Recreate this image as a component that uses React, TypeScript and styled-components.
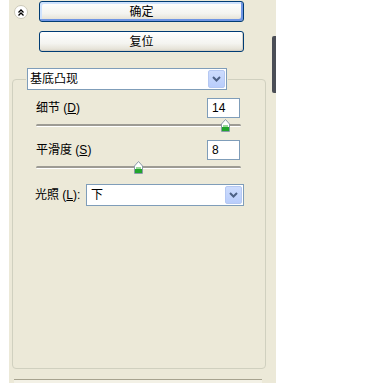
import React from "react";
import styled, { createGlobalStyle } from "styled-components";

const GlobalStyle = createGlobalStyle`
  html, body {
    margin: 0;
    padding: 0;
    background: #ffffff;
  }
  body {
    font-family: "Liberation Sans", "Noto Sans CJK SC", sans-serif;
    font-size: 12px;
    color: #000000;
  }
`;

const params = [
  { label: "细节", key: "D", value: 14, min: 1, max: 15 },
  { label: "平滑度", key: "S", value: 8, min: 1, max: 15 },
];

const TRACK_W = 204;

const App = () => {
  return (
    <Page>
      <GlobalStyle />
      <Panel>
        <Main>
          <TopRow>
            <CollapseBtn>
              <svg width="14" height="14" viewBox="0 0 14 14">
                <circle cx="7" cy="7" r="6.5" fill="#ffffff" stroke="#cbc8b8" />
                <polyline points="4.5,7.5 7,5 9.5,7.5" fill="none" stroke="#000" strokeWidth="1.3" />
                <polyline points="4.5,10.5 7,8 9.5,10.5" fill="none" stroke="#000" strokeWidth="1.3" />
              </svg>
            </CollapseBtn>
            <XPButton $primary>确定</XPButton>
          </TopRow>
          <SecondRow>
            <XPButton>复位</XPButton>
          </SecondRow>

          <Group>
            <GroupLegend>
              <Dropdown $width={200}>
                <DropText>基底凸现</DropText>
                <DropBtn>
                  <Chevron />
                </DropBtn>
              </Dropdown>
            </GroupLegend>

            {params.map((p) => {
              const ratio = (p.value - p.min) / (p.max - p.min);
              return (
                <ParamBlock key={p.key}>
                  <ValueRow>
                    <Label>
                      {p.label} (<u>{p.key}</u>)
                    </Label>
                    <NumberBox>{p.value}</NumberBox>
                  </ValueRow>
                  <Slider>
                    <Track />
                    <Thumb style={{ left: Math.round(ratio * TRACK_W) - 4 }}>
                      <svg width="9" height="13" viewBox="0 0 9 13">
                        <polygon points="0.5,5 4.5,0.5 8.5,5 8.5,12.5 0.5,12.5" fill="#ffffff" stroke="#8b9aa8" />
                        <rect x="1" y="8" width="7" height="4" fill="#21a52c" />
                        <rect x="2" y="6" width="5" height="2" fill="#9ad89a" />
                      </svg>
                    </Thumb>
                  </Slider>
                </ParamBlock>
              );
            })}

            <LightRow>
              <Label>
                光照 (<u>L</u>):
              </Label>
              <Dropdown $width={158}>
                <DropText $pad={4}>下</DropText>
                <DropBtn>
                  <Chevron />
                </DropBtn>
              </Dropdown>
            </LightRow>
          </Group>

          <BottomEdge />
        </Main>
        <Side>
          <ScrollThumb />
        </Side>
      </Panel>
    </Page>
  );
};

const Chevron = () => (
  <svg width="9" height="6" viewBox="0 0 9 6">
    <polyline points="1,1 4.5,4.5 8,1" fill="none" stroke="#4d6185" strokeWidth="2" />
  </svg>
);

export default App;

const Page = styled.div`
  width: 385px;
  height: 383px;
  overflow: hidden;
  background: #ffffff;
`;

const Panel = styled.div`
  margin-left: 9px;
  width: 267px;
  height: 383px;
  background: #ece9d8;
  display: flex;
`;

const Main = styled.div`
  width: 263px;
  display: flex;
  flex-direction: column;
  padding-top: 1px;
  box-sizing: border-box;
`;

const Side = styled.div`
  width: 4px;
  padding-top: 36px;
`;

const ScrollThumb = styled.div`
  height: 57px;
  background: #4b4e56;
  border-radius: 2px 0 0 2px;
`;

const TopRow = styled.div`
  display: flex;
  align-items: center;
  height: 21px;
`;

const SecondRow = styled.div`
  display: flex;
  margin-top: 9px;
  padding-left: 30px;
`;

const CollapseBtn = styled.div`
  width: 14px;
  height: 14px;
  margin-left: 5px;
  margin-right: 11px;
  display: flex;
`;

const XPButton = styled.div<{ $primary?: boolean }>`
  width: 205px;
  height: 21px;
  box-sizing: border-box;
  border: 1px solid #003c74;
  border-radius: 3px;
  background: linear-gradient(#ffffff 0%, #f4f4f0 60%, #e6e3d8 90%, #d6d0c5 100%);
  box-shadow: ${(p) =>
    p.$primary
      ? "inset -2px -2px 0 #6f95e4, inset 2px 2px 0 #cfe2fd"
      : "inset -1px -1px 0 #d6d0c5"};
  display: flex;
  align-items: center;
  justify-content: center;
  font-size: 12px;
  line-height: 14px;
`;

const Group = styled.fieldset`
  margin: 16px 0 0 3px;
  width: 254px;
  height: 301px;
  box-sizing: border-box;
  border: 1px solid #d0d0bf;
  border-radius: 4px;
  padding: 0 25px 0 23px;
  min-width: 0;
`;

const GroupLegend = styled.legend`
  margin-left: -10px;
  padding: 0 1px;
`;

const Dropdown = styled.div<{ $width: number }>`
  width: ${(p) => p.$width}px;
  height: 22px;
  box-sizing: border-box;
  border: 1px solid #7f9db9;
  background: #ffffff;
  display: flex;
  align-items: center;
`;

const DropText = styled.div<{ $pad?: number }>`
  flex: 1;
  padding-left: ${(p) => p.$pad ?? 2}px;
  font-size: 12px;
  line-height: 14px;
`;

const DropBtn = styled.div`
  width: 17px;
  height: 18px;
  margin-right: 1px;
  box-sizing: border-box;
  border: 1px solid #b5c8f2;
  border-radius: 2px;
  background: linear-gradient(#cddcfd, #b9cdfb);
  display: flex;
  align-items: center;
  justify-content: center;
`;

const ParamBlock = styled.div`
  margin-top: 8px;
`;

const ValueRow = styled.div`
  display: flex;
  justify-content: space-between;
  align-items: center;
  height: 20px;
`;

const Label = styled.div`
  font-size: 12px;
  line-height: 14px;
  white-space: nowrap;

  u {
    text-decoration: underline;
  }
`;

const NumberBox = styled.div`
  width: 33px;
  height: 20px;
  box-sizing: border-box;
  border: 1px solid #7f9db9;
  background: #ffffff;
  padding: 2px 0 0 4px;
  font-size: 12px;
  line-height: 14px;
`;

const Slider = styled.div`
  position: relative;
  height: 14px;
  margin-right: -1px;
`;

const Track = styled.div`
  position: relative;
  top: 6px;
  height: 2px;
  border-radius: 2px;
  background: #9d9b94;
  border-bottom: 1px solid #ffffff;
`;

const Thumb = styled.div`
  position: absolute;
  top: 1px;
  width: 9px;
  height: 13px;
  display: flex;
`;

const LightRow = styled.div`
  display: flex;
  justify-content: space-between;
  align-items: center;
  margin: 10px -4px 0 -1px;
`;

const BottomEdge = styled.div`
  margin: 10px 10px 0 5px;
  height: 3px;
  border-top: 1px solid #a7a38f;
  background: #f3f1e6;
`;
